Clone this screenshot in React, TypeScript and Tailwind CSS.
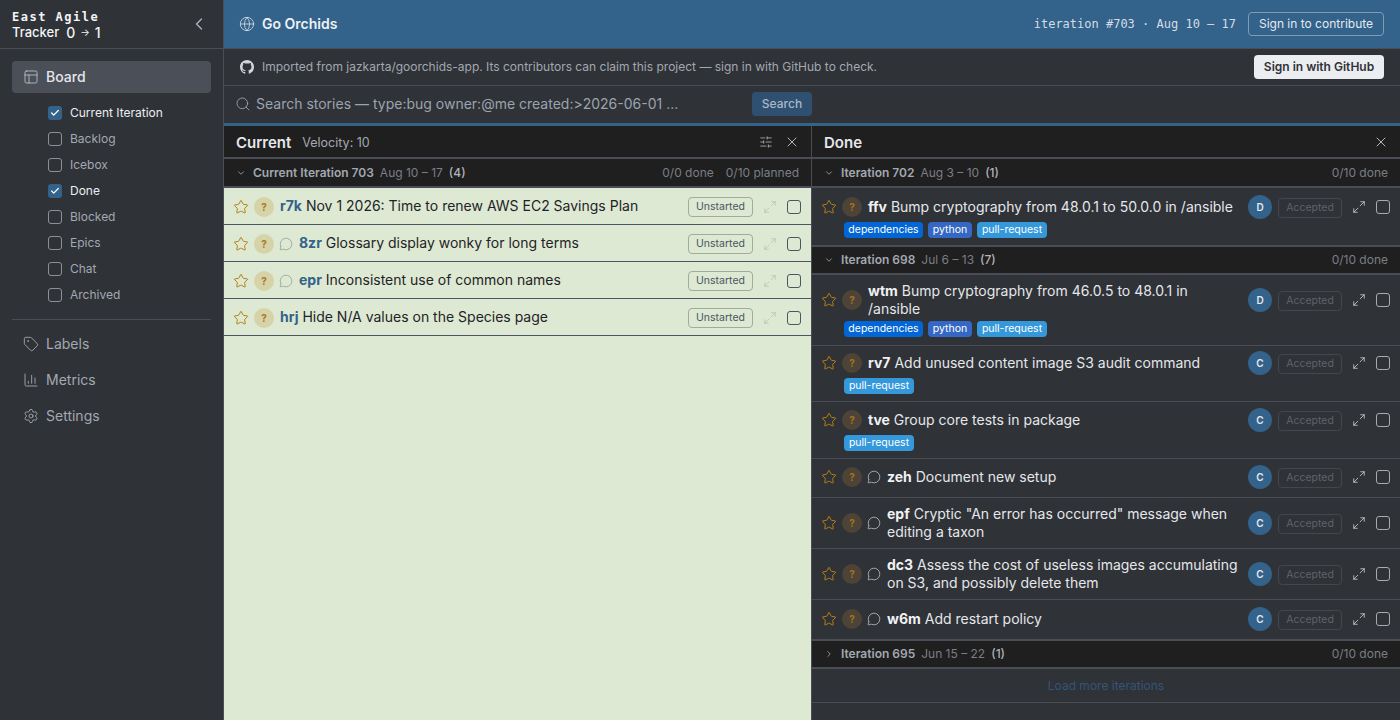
import { ChartColumn, ChevronDown, ChevronLeft, ChevronRight, Check, Globe, Maximize2, MessageCircle, PanelsTopLeft, Search, Settings, SlidersHorizontal, Star, Tag, X } from 'lucide-react';

const sans = { fontFamily: 'Inter, "Liberation Sans", sans-serif' };

const filters = [
  { name: 'Current Iteration', on: true },
  { name: 'Backlog', on: false },
  { name: 'Icebox', on: false },
  { name: 'Done', on: true },
  { name: 'Blocked', on: false },
  { name: 'Epics', on: false },
  { name: 'Chat', on: false },
  { name: 'Archived', on: false },
];

const currentStories = [
  { id: 'r7k', title: 'Nov 1 2026: Time to renew AWS EC2 Savings Plan', chat: false },
  { id: '8zr', title: 'Glossary display wonky for long terms', chat: true },
  { id: 'epr', title: 'Inconsistent use of common names', chat: true },
  { id: 'hrj', title: 'Hide N/A values on the Species page', chat: false },
];

const labelClass: Record<string, string> = {
  dependencies: 'bg-[#0366d6] w-[79px]',
  python: 'bg-[#3568c4] w-[44px]',
  'pull-request': 'bg-[#3498db] w-[70px]',
};

function GithubMark() {
  return (
    <svg width="14" height="14" viewBox="0 0 16 16" fill="currentColor" className="text-[#d1d5db]">
      <path d="M8 0C3.58 0 0 3.58 0 8c0 3.54 2.29 6.53 5.47 7.59.4.07.55-.17.55-.38 0-.19-.01-.82-.01-1.49-2.01.37-2.53-.49-2.69-.94-.09-.23-.48-.94-.82-1.13-.28-.15-.68-.52-.01-.53.63-.01 1.08.58 1.23.82.72 1.21 1.87.87 2.33.66.07-.52.28-.87.51-1.07-1.78-.2-3.64-.89-3.64-3.95 0-.87.31-1.59.82-2.15-.08-.2-.36-1.02.08-2.12 0 0 .67-.21 2.2.82.64-.18 1.32-.27 2-.27s1.36.09 2 .27c1.53-1.04 2.2-.82 2.2-.82.44 1.1.16 1.92.08 2.12.51.56.82 1.27.82 2.15 0 3.07-1.87 3.75-3.65 3.95.29.25.54.73.54 1.48 0 1.07-.01 1.93-.01 2.2 0 .21.15.46.55.38A8.01 8.01 0 0 0 16 8c0-4.42-3.58-8-8-8Z" />
    </svg>
  );
}

function Sidebar() {
  return (
    <aside className="w-[224px] shrink-0 bg-[#2f3237] border-r border-[#4a4d55] flex flex-col">
      <div className="h-[49px] shrink-0 border-b border-[#4a4d55] pl-3 pr-[14px] flex items-center justify-between">
        <div className="pt-[2px] text-[#f3f4f6] leading-[15px] font-bold">
          <div className="tracking-[1.5px] text-[12px]" style={{ fontFamily: '"DejaVu Sans Mono", monospace' }}>East Agile</div>
          <div className="flex items-center">
            <span className="font-medium text-[13px]">Tracker</span>
            <span className="ml-[7px] text-[14px] font-medium">0</span>
            <span className="mx-[5px] text-[10px] font-normal">→</span>
            <span className="text-[14px] font-medium">1</span>
          </div>
        </div>
        <ChevronLeft size={20} strokeWidth={1.5} className="text-[#b0b4bb]" />
      </div>

      <div className="px-3 pt-3">
        <div className="h-8 rounded bg-[#4b4f58] flex items-center gap-[7px] pl-[11px] text-[14px] leading-[20px] font-medium text-[#e5e7eb]">
          <PanelsTopLeft size={16} strokeWidth={1.25} className="text-[#c3c6cc]" />
          <span>Board</span>
        </div>
        <div className="pl-9 pt-[7px] pb-[11px] flex flex-col">
          {filters.map((f) => (
            <div key={f.name} className="h-[26px] flex items-center gap-[8px] text-[12px]">
              {f.on ? (
                <span className="w-[14px] h-[14px] rounded-[3px] bg-[#33628b] flex items-center justify-center">
                  <Check size={10} strokeWidth={3} className="text-white" />
                </span>
              ) : (
                <span className="w-[14px] h-[14px] rounded-[3px] border border-[#8d9096]" />
              )}
              <span className={f.on ? 'text-[#eceef1]' : 'text-[#a3a8b1]'}>{f.name}</span>
            </div>
          ))}
        </div>
        <div className="border-t border-[#4a4d55]" />
        <div className="pt-[6px] flex flex-col text-[14px] leading-[20px] text-[#a3a8b1]">
          <div className="h-9 flex items-center gap-[7px] pl-[11px]"><Tag size={16} strokeWidth={1.25} className="text-[#b0b4bb]" /><span>Labels</span></div>
          <div className="h-9 flex items-center gap-[7px] pl-[11px]"><ChartColumn size={16} strokeWidth={1.25} className="text-[#b0b4bb]" /><span>Metrics</span></div>
          <div className="h-9 flex items-center gap-[7px] pl-[11px]"><Settings size={16} strokeWidth={1.25} className="text-[#b0b4bb]" /><span>Settings</span></div>
        </div>
      </div>
    </aside>
  );
}

function CurrentRow({ id, title, chat }: { id: string; title: string; chat: boolean }) {
  return (
    <div className="h-[37px] border-b border-[#4b5563] flex items-center pt-[2px] pl-[9px] pr-[10px]">
      <Star size={16} strokeWidth={1.5} className="text-[#b97f14] shrink-0" />
      <span className="ml-[5px] w-5 h-5 rounded-full bg-[#d6d3a8] flex items-center justify-center text-[10px] font-bold text-[#a9781f] shrink-0">?</span>
      {chat && <MessageCircle size={14} strokeWidth={1.25} className="ml-[5px] text-[#8a9a96] shrink-0" />}
      <span className="ml-[6px] -mt-[2px] text-[14px] leading-[18px] text-[#1f2328] whitespace-nowrap">
        <b className="font-bold text-[#33628b]">{id}</b> {title}
      </span>
      <span className="ml-auto h-5 w-[65px] rounded border border-[#a3ab9c] text-[#4b5563] text-[10.5px] flex items-center justify-center shrink-0">Unstarted</span>
      <Maximize2 size={14} strokeWidth={1} className="ml-[10px] text-[#a9b5ad] shrink-0" />
      <span className="ml-[10px] w-[14px] h-[14px] rounded-[3px] border border-[#4b5563] shrink-0" />
    </div>
  );
}

function IterationHeader({ open, name, dates, count, done, planned, ruled = false }: { open: boolean; name: string; dates: string; count: number; done: string; planned?: string; ruled?: boolean }) {
  return (
    <div className={`h-[29px] shrink-0 bg-[#1f1f1f] flex items-center pl-3 pr-3 text-[12px] border-b-2 border-[#4a4d55] ${ruled ? 'border-t' : ''}`}>
      {open ? <ChevronDown size={10} className="text-[#9ca3af] mr-[7px]" /> : <ChevronRight size={10} className="text-[#9ca3af] mr-[7px]" />}
      <span className="font-semibold text-[#a3a8b1]">{name}</span>
      <span className="ml-[6px] text-[#7a7e85]">{dates}</span>
      <span className="ml-[6px] font-medium text-[#b0b4bb]">({count})</span>
      <span className="ml-auto text-[#7a7e85]">{done}</span>
      {planned && <span className="ml-3 text-[#7a7e85]">{planned}</span>}
    </div>
  );
}

function DoneRow({ id, title, owner, labels = [], chat = false, h }: { id: string; title: string; owner: string; labels?: string[]; chat?: boolean; h: string }) {
  return (
    <div className={`${h} shrink-0 border-b border-[#4a4d55] flex flex-col pl-[9px] pr-[10px]`}>
      <div className="flex items-center">
        <Star size={16} strokeWidth={1.5} className="text-[#b97f14] shrink-0" />
        <span className="ml-[5px] w-5 h-5 rounded-full bg-[#4d4336] flex items-center justify-center text-[10px] font-bold text-[#a9701f] shrink-0">?</span>
        {chat && <MessageCircle size={14} strokeWidth={1.25} className="ml-[5px] text-[#c9ccd1] shrink-0" />}
        <span className="ml-[6px] flex-1 min-w-0 text-[14px] leading-[18px] text-[#e5e7eb]">
          <b className="font-bold text-[#f0f1f3]">{id}</b> {title}
        </span>
        <span className="ml-2 w-6 h-6 rounded-full bg-[#33628b] flex items-center justify-center text-[10px] font-semibold text-[#e5e7eb] shrink-0">{owner}</span>
        <span className="ml-[6px] mt-[2px] w-[64px] h-5 rounded border border-[#43464c] text-[#5f6369] text-[10.5px] flex items-center justify-center shrink-0">Accepted</span>
        <Maximize2 size={14} strokeWidth={1.25} className="ml-[10px] text-[#dfe1e4] shrink-0" />
        <span className="ml-[10px] w-[14px] h-[14px] rounded-[3px] border border-[#a8abb0] shrink-0" />
      </div>
      {labels.length > 0 && (
        <div className="flex gap-[5px] mt-[3px] ml-[23px]">
          {labels.map((l) => (
            <span key={l} className={`h-4 rounded text-center text-[10.5px] leading-4 text-white ${labelClass[l]}`}>{l}</span>
          ))}
        </div>
      )}
    </div>
  );
}

export default function App() {
  return (
    <div className="w-[1400px] h-[720px] overflow-hidden flex bg-[#2f3237]" style={sans}>
      <Sidebar />
      <main className="flex-1 min-w-0 flex flex-col">
        <header className="h-[49px] shrink-0 bg-[#33628b] border-b border-[#4a4d55] flex items-center pl-[15px] pr-4">
          <Globe size={16} strokeWidth={1.25} className="text-[#d5dde6]" />
          <span className="ml-[7px] text-[14px] leading-[20px] font-semibold text-[#eef1f4]">Go Orchids</span>
          <span className="ml-auto text-[12px] text-[#d5dde6]" style={{ fontFamily: '"DejaVu Sans Mono", monospace' }}>iteration #703 · Aug 10 – 17</span>
          <span className="ml-3 h-6 w-[136px] rounded border border-[#7f9bb5] text-[12px] text-[#e5e9ee] flex items-center justify-center">Sign in to contribute</span>
        </header>
        <div className="h-[37px] shrink-0 border-b border-[#4a4d55] flex items-center pl-4 pr-4">
          <GithubMark />
          <span className="ml-2 text-[12px] text-[#a3a8b1]">Imported from jazkarta/goorchids-app. Its contributors can claim this project — sign in with GitHub to check.</span>
          <span className="ml-auto h-6 w-[130px] rounded bg-[#ecedf0] text-[12px] font-semibold text-[#2f3237] flex items-center justify-center">Sign in with GitHub</span>
        </div>
        <div className="h-[37px] shrink-0 flex items-center pb-[2px] pl-[11px]">
          <Search size={16} strokeWidth={1.25} className="text-[#a3a8b1]" />
          <span className="ml-[5px] w-[496px] text-[14px] leading-[20px] text-[#9ca3af] whitespace-nowrap">Search stories — type:bug owner:@me created:&gt;2026-06-01 ...</span>
          <span className="h-6 w-[60px] rounded bg-[#2f5070] text-[12px] font-medium text-[#a9b8c7] flex items-center justify-center">Search</span>
        </div>
        <div className="h-[3px] shrink-0 bg-[#33628b]" />

        <div className="flex-1 min-h-0 flex">
          <section className="w-[588px] shrink-0 bg-[#dde9d2] flex flex-col border-r border-[#4a4d55]">
            <div className="h-[33px] shrink-0 bg-[#1f1f1f] border-b-2 border-[#4a4d55] flex items-center pl-3 pr-[11px]">
              <span className="pt-[2px] text-[15px] leading-[20px] font-semibold text-[#e5e7eb]">Current</span>
              <span className="ml-[11px] pt-[2px] text-[12.5px] leading-[20px] text-[#a3a8b1]">Velocity: 10</span>
              <SlidersHorizontal size={14} strokeWidth={1.25} className="ml-auto text-[#c3c6cc]" />
              <X size={16} strokeWidth={1.25} className="ml-[11px] text-[#d1d5db]" />
            </div>
            <IterationHeader open name="Current Iteration 703" dates="Aug 10 – 17" count={4} done="0/0 done" planned="0/10 planned" />
            {currentStories.map((s) => (
              <CurrentRow key={s.id} {...s} />
            ))}
          </section>

          <section className="flex-1 min-w-0 flex flex-col">
            <div className="h-[33px] shrink-0 bg-[#1f1f1f] border-b-2 border-[#4a4d55] flex items-center pl-3 pr-[11px]">
              <span className="pt-[2px] text-[15px] leading-[20px] font-semibold text-[#e5e7eb]">Done</span>
              <X size={16} strokeWidth={1.25} className="ml-auto text-[#d1d5db]" />
            </div>
            <IterationHeader open name="Iteration 702" dates="Aug 3 – 10" count={1} done="0/10 done" />
            <DoneRow h="h-[58px] pt-[7px]" id="ffv" title="Bump cryptography from 48.0.1 to 50.0.0 in /ansible" owner="D" labels={['dependencies', 'python', 'pull-request']} />
            <IterationHeader open ruled name="Iteration 698" dates="Jul 6 – 13" count={7} done="0/10 done" />
            <DoneRow h="h-[71px] pt-[7px]" id="wtm" title="Bump cryptography from 46.0.5 to 48.0.1 in /ansible" owner="D" labels={['dependencies', 'python', 'pull-request']} />
            <DoneRow h="h-[56px] pt-[5px]" id="rv7" title="Add unused content image S3 audit command" owner="C" labels={['pull-request']} />
            <DoneRow h="h-[57px] pt-[6px]" id="tve" title="Group core tests in package" owner="C" labels={['pull-request']} />
            <DoneRow h="h-[39px] pt-[6px]" id="zeh" chat title="Document new setup" owner="C" />
            <DoneRow h="h-[51px] pt-[7px]" id="epf" chat title={'Cryptic "An error has occurred" message when editing a taxon'} owner="C" />
            <DoneRow h="h-[51px] pt-[7px]" id="dc3" chat title="Assess the cost of useless images accumulating on S3, and possibly delete them" owner="C" />
            <DoneRow h="h-[40px] pt-[7px]" id="w6m" chat title="Add restart policy" owner="C" />
            <IterationHeader open={false} ruled name="Iteration 695" dates="Jun 15 – 22" count={1} done="0/10 done" />
            <div className="h-[34px] shrink-0 border-b border-[#4a4d55] flex items-center justify-center text-[12px] text-[#33557a]">Load more iterations</div>
          </section>
        </div>
      </main>
    </div>
  );
}
